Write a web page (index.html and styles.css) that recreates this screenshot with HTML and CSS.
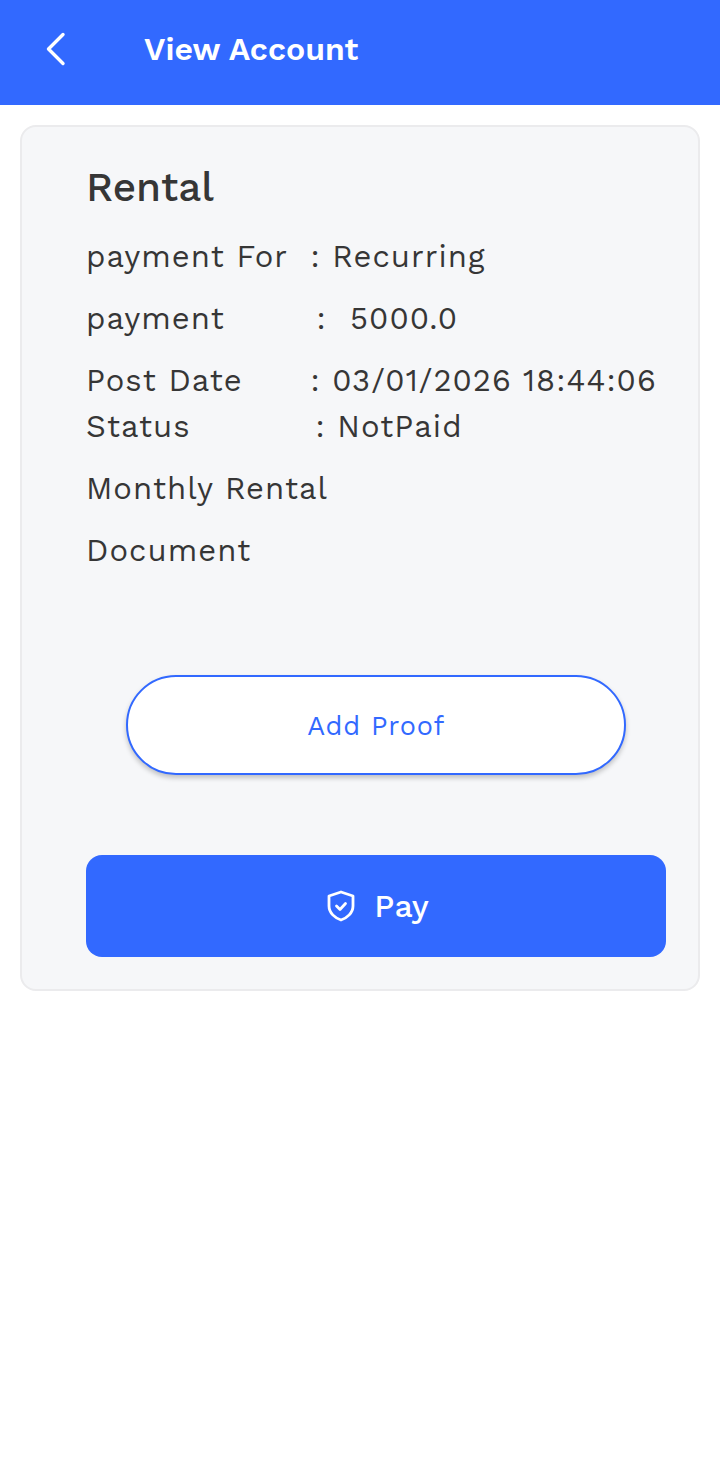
FILE: index.html
```html
<!DOCTYPE html>
<html lang="en">
<head>
    <meta charset="UTF-8">
    <meta name="viewport" content="width=device-width, initial-scale=1.0">
    <title>View Account</title>
    <link rel="stylesheet" href="styles.css">
</head>
<body>
    <header class="app-bar">
        <svg class="back-icon" width="24" height="36" viewBox="0 0 24 36" fill="none" stroke="#fff" stroke-width="3.4" stroke-linecap="round" stroke-linejoin="round">
            <path d="M19 3.5 L4.5 18 L19 32.5"/>
        </svg>
        <h1 class="app-title">View Account</h1>
    </header>
    <div class="card">
        <h2 class="card-title">Rental</h2>
        <div class="row"><span class="label">payment For</span><span class="value">: Recurring</span></div>
        <div class="row"><span class="label">payment</span><span class="value value-amount">:&nbsp;&nbsp;5000.0</span></div>
        <div class="row row-tight"><span class="label">Post Date</span><span class="value">: 03/01/2026 18:44:06</span></div>
        <div class="row"><span class="label">Status</span><span class="value value-status">: NotPaid</span></div>
        <div class="row">Monthly Rental</div>
        <div class="row">Document</div>
        <div class="proof-wrap">
            <button class="proof-btn">Add Proof</button>
        </div>
        <button class="pay-btn">
            <svg width="30" height="34" viewBox="0 0 30 34" fill="none" stroke="#fff" stroke-width="2.8" stroke-linecap="round" stroke-linejoin="round">
                <path d="M15 3 L27 7 V17 C27 24 21 29 15 31 C9 29 3 24 3 17 V7 Z"/>
                <path d="M10.5 17 L14 20.5 L19.5 14.5"/>
            </svg>
            <span>Pay</span>
        </button>
    </div>
</body>
</html>
```
FILE: styles.css
```css
body {
    margin: 0;
    background: #fff;
    font-family: "Work Sans", "Inter", "Noto Sans", sans-serif;
    color: #363636;
}
.app-bar {
    display: flex;
    align-items: center;
    height: 105px;
    padding: 0 0 7px 44px;
    box-sizing: border-box;
    background: #3269ff;
}
.back-icon {
    margin-right: 76px;
}
.app-title {
    margin: 0;
    font-size: 32px;
    font-weight: 600;
    color: #fff;
}
.card {
    margin: 20px 20px 0;
    padding: 35px 32px 32px 64px;
    border: 2px solid #ebebed;
    border-radius: 16px;
    background: #f6f7f9;
}
.card-title {
    margin: 0 0 22px;
    font-size: 40.5px;
    font-weight: 500;
    line-height: 50px;
}
.row {
    display: flex;
    font-size: 31px;
    line-height: 46px;
    margin-bottom: 16px;
    letter-spacing: 1.05px;
}
.row-tight {
    margin-bottom: 0;
}
.label {
    width: 224.5px;
}
.value-amount {
    margin-left: 6px;
}
.value-status {
    margin-left: 5px;
}
.proof-wrap {
    display: flex;
    justify-content: center;
    margin: 101px 0 80px;
}
.proof-btn {
    width: 500px;
    height: 100px;
    padding-top: 3px;
    border: 2px solid #3269ff;
    border-radius: 50px;
    background: #fff;
    box-shadow: 0 3px 5px rgba(0, 0, 0, 0.22);
    color: #3269ff;
    font-family: inherit;
    font-size: 27px;
    letter-spacing: 0.8px;
}
.pay-btn {
    display: flex;
    align-items: center;
    justify-content: center;
    gap: 18px;
    width: 580px;
    height: 102px;
    padding: 0 0 0 3px;
    border: none;
    border-radius: 16px;
    background: #3269ff;
    color: #fff;
    font-family: inherit;
    font-size: 32px;
    font-weight: 500;
}
```
